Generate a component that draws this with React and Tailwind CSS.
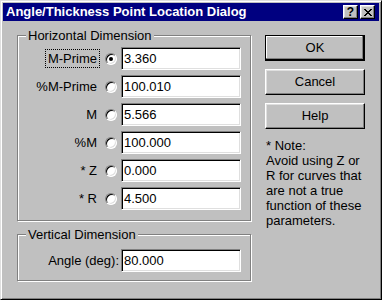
import React from "react";

const raised =
  "border border-t-white border-l-white border-r-black border-b-black shadow-[inset_-1px_-1px_#808080,inset_1px_1px_#dfdfdf]";
const sunken =
  "border border-t-[#808080] border-l-[#808080] border-r-white border-b-white shadow-[inset_1px_1px_#000,inset_-1px_-1px_#dfdfdf]";

function CloseGlyph() {
  const rows = ["11000011", "01100110", "00111100", "00011000", "00111100", "01100110", "11000011"];
  return (
    <svg width="8" height="7" viewBox="0 0 8 7" shapeRendering="crispEdges">
      {rows.map((r, y) =>
        r.split("").map((c, x) => (c === "1" ? <rect key={y + "-" + x} x={x} y={y} width="1" height="1" fill="#000" /> : null))
      )}
    </svg>
  );
}

function Radio({ checked }) {
  return (
    <div className="relative w-[12px] h-[12px] shrink-0 rounded-full bg-white border border-t-[#808080] border-l-[#808080] border-r-white border-b-white shadow-[inset_1px_1px_#000,inset_-1px_-1px_#dfdfdf]">
      {checked && <div className="absolute left-[3px] top-[3px] w-[4px] h-[4px] rounded-full bg-black" />}
    </div>
  );
}

function Field({ value }) {
  return (
    <input
      readOnly
      defaultValue={value}
      className={`w-[120px] h-[23px] shrink-0 bg-white pl-[2px] text-[13px] text-black outline-none ${sunken}`}
    />
  );
}

function Group({ title, className, children }) {
  return (
    <div className={`relative border border-[#808080] shadow-[inset_1px_1px_#fff,1px_1px_#fff] ${className}`}>
      <span className="absolute left-[8px] top-[-8px] bg-[#c0c0c0] px-[2px] leading-[15px]">{title}</span>
      {children}
    </div>
  );
}

function Button({ children, isDefault }) {
  const cls = isDefault
    ? "border border-black shadow-[inset_-1px_-1px_#000,inset_-2px_-2px_#808080,inset_1px_1px_#fff]"
    : raised;
  return (
    <div className={`h-[26px] w-[100px] flex items-center justify-center bg-[#c0c0c0] ${cls}`}>
      {children}
    </div>
  );
}

const rows = [
  { label: "M-Prime", value: "3.360", checked: true },
  { label: "%M-Prime", value: "100.010" },
  { label: "M", value: "5.566" },
  { label: "%M", value: "100.000" },
  { label: "* Z", value: "0.000" },
  { label: "* R", value: "4.500" },
];

export default function App() {
  return (
    <div className="w-[382px] h-[300px] bg-[#c0c0c0] p-[2px] text-[13px] text-black font-['Liberation_Sans',Arial,sans-serif] border border-t-[#dfdfdf] border-l-[#dfdfdf] border-r-black border-b-black shadow-[inset_1px_1px_#fff,inset_-1px_-1px_#808080]">
      {/* title bar */}
      <div className="h-[18px] bg-[#000080] flex items-center justify-between pl-[3px] pr-[4px]">
        <span className="text-white font-bold leading-[18px]">Angle/Thickness Point Location Dialog</span>
        <div className="flex gap-[2px]">
          <div className={`w-[15px] h-[14px] bg-[#c0c0c0] flex items-center justify-center ${raised}`}>
            <span className="font-bold text-[12px] leading-none">?</span>
          </div>
          <div className={`w-[15px] h-[14px] bg-[#c0c0c0] flex items-center justify-center ${raised}`}>
            <CloseGlyph />
          </div>
        </div>
      </div>

      <div className="flex gap-[14px] pt-[14px] px-[14px]">
        <div className="flex flex-col w-[234px]">
          <Group title="Horizontal Dimension" className="h-[186px] pt-[11px]">
            <div className="flex flex-col gap-[5px]">
              {rows.map(r => (
                <div key={r.label} className="flex items-center h-[23px]">
                  <div className="w-[82px] flex justify-end">
                    <span className={`px-[2px] leading-[17px] border ${r.checked ? "border-dotted border-black" : "border-transparent"}`}>
                      {r.label}
                    </span>
                  </div>
                  <div className="ml-[5px]"><Radio checked={r.checked} /></div>
                  <div className="ml-[4px]"><Field value={r.value} /></div>
                </div>
              ))}
            </div>
          </Group>

          <Group title="Vertical Dimension" className="mt-[13px] h-[47px] pt-[14px]">
            <div className="flex items-center h-[23px]">
              <div className="w-[101px] text-right">Angle (deg):</div>
              <div className="ml-[2px]"><Field value="80.000" /></div>
            </div>
          </Group>
        </div>

        <div className="flex flex-col w-[100px]">
          <Button isDefault>OK</Button>
          <div className="mt-[8px]"><Button>Cancel</Button></div>
          <div className="mt-[8px]"><Button>Help</Button></div>
          <div className="mt-[9px] pl-[1px] leading-[15px]">
            <div>* Note:</div>
            <div>Avoid using Z or</div>
            <div>R for curves that</div>
            <div>are not a true</div>
            <div>function of these</div>
            <div>parameters.</div>
          </div>
        </div>
      </div>
    </div>
  );
}
